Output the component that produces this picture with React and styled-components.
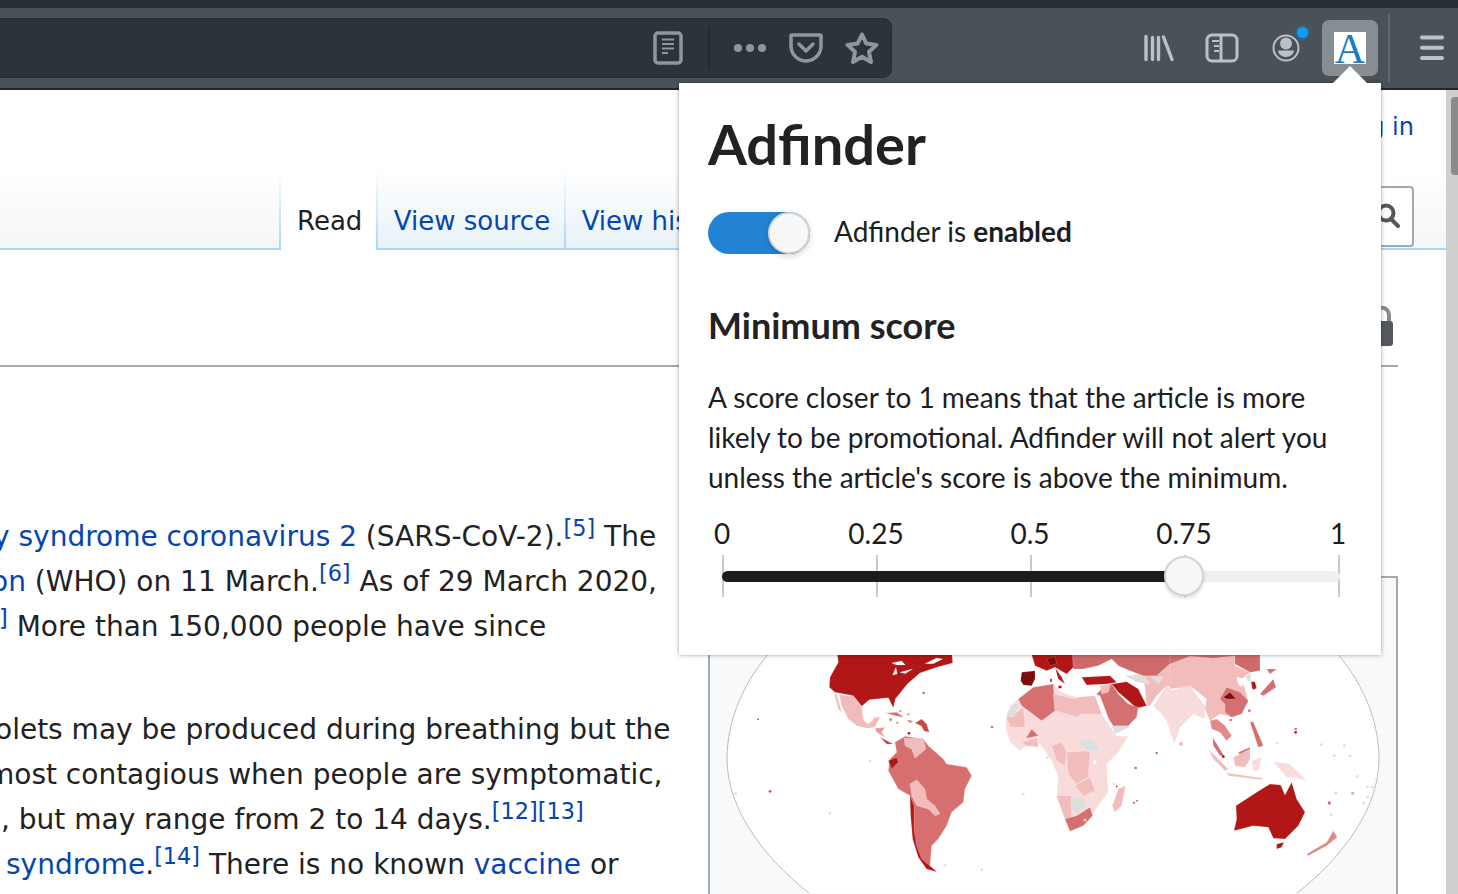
import React from 'react'
import styled, { createGlobalStyle } from 'styled-components'

const GlobalStyle = createGlobalStyle`
  html, body { margin: 0; padding: 0; background: #fff; overflow: hidden; }
  #root { width: 1458px; height: 894px; overflow: hidden; position: relative; }
  * { box-sizing: border-box; }
`

const LINK = '#0645ad'
const WIKI_FONT = '"DejaVu Sans", sans-serif'
const POPUP_FONT = 'Lato, "Open Sans", sans-serif'

/* browser chrome */
const TitleStrip = styled.div`
  height: 8px;
  background: #252f34;
`
const Toolbar = styled.div`
  height: 82px;
  background: #4a5259;
  border-bottom: 2px solid #20282c;
  display: flex;
  padding: 10px 0 0;
`
const UrlBar = styled.div`
  width: 892px;
  height: 60px;
  margin-right: auto;
  background: #2a343a;
  border: 1px solid #252e33;
  border-left: none;
  border-radius: 0 9px 9px 0;
  display: flex;
  align-items: center;
  justify-content: flex-end;
  padding-right: 1px;
`
const Slot = styled.div`
  width: ${p => p.$w || 56}px;
  height: 56px;
  flex: none;
  display: flex;
  align-items: center;
  justify-content: center;
  position: relative;
  color: ${p => p.$dim ? '#8c989e' : '#b9c3c7'};
`
const UrlDivider = styled.div`
  width: 2px;
  height: 42px;
  margin: 0 12px;
  background: #232b30;
`
const ToolGroup = styled.div`
  display: flex;
  align-items: flex-start;
  padding-top: 2px;
`
const ToolDivider = styled.div`
  width: 2px;
  height: 68px;
  margin: -6px 15px 0 10px;
  background: #626a70;
`
const ExtensionButton = styled.div`
  width: 56px;
  height: 56px;
  margin-left: 4px;
  border-radius: 7px;
  background: #888d91;
  display: flex;
  align-items: center;
  justify-content: center;
`
const ExtensionIcon = styled.span`
  width: 32px;
  height: 32px;
  background: #fff;
  color: #1b7dc0;
  font: 42px/34px "Liberation Serif", serif;
  text-align: center;
  overflow: hidden;
`
const Badge = styled.span`
  position: absolute;
  top: 7px;
  right: 10px;
  width: 11px;
  height: 11px;
  border-radius: 50%;
  background: #0a9dfb;
  box-shadow: 0 0 0 2px rgba(10, 132, 210, .35);
`

/* wiki page */
const Frame = styled.div`
  display: flex;
  height: 804px;
  overflow: hidden;
`
const Page = styled.div`
  width: 1446px;
  flex: none;
  font-family: ${WIKI_FONT};
  color: #222;
`
const ScrollTrack = styled.div`
  width: 12px;
  background: #cfcfcf;
  padding: 7px 0 0 5px;
`
const ScrollThumb = styled.div`
  width: 7px;
  height: 78px;
  border-radius: 4px 0 0 4px;
  background: #8b8b8b;
`
const Personal = styled.div`
  height: 80px;
  padding: 21px 32px 0 0;
  text-align: right;
  font-size: 24px;
  line-height: 32px;
  color: ${LINK};
`
const TabBar = styled.div`
  height: 80px;
  display: flex;
  align-items: stretch;
`
const Filler = styled.div`
  background: ${p => p.$w ? 'linear-gradient(#fff, #a7d7f9) right / 2px 100% no-repeat,' : ''} linear-gradient(#fff, #f6f6f6);
  border-bottom: 2px solid #a7d7f9;
  ${p => p.$w ? `width: ${p.$w}px; flex: none;` : 'flex: 1;'}
  display: flex;
  justify-content: flex-end;
  padding: 16px 32px 0 0;
`
const SearchBox = styled.div`
  width: 200px;
  height: 61px;
  border: 2px solid #a2a9b1;
  border-radius: 4px;
  background: #fff;
  display: flex;
  justify-content: flex-end;
  align-items: center;
  padding: 0 12px 2px 0;
`
const Tab = styled.div`
  padding: 35px 15.500px 0 16px;
  font-size: 26px;
  line-height: 32px;
  white-space: nowrap;
  color: ${p => p.$active ? '#222' : LINK};
  background: linear-gradient(#fff, #a7d7f9) right / 2px 100% no-repeat,
    ${p => p.$active ? '#fff' : 'linear-gradient(#fff, #e8f2f8)'};
  border-bottom: ${p => p.$active ? 'none' : '2px solid #a7d7f9'};
`
const TitleRow = styled.div`
  width: 1398px;
  height: 117px;
  border-bottom: 2px solid #a2a9b1;
  display: flex;
  justify-content: flex-end;
  align-items: flex-end;
  padding: 0 4px 19px 0;
`
const Article = styled.div`
  display: flex;
`
const TextColumn = styled.div`
  width: 708px;
  flex: none;
  padding-top: 147px;
  overflow: hidden;
  font-size: 28px;
  line-height: 45px;
`
const Para = styled.div`
  margin-bottom: 58px;
`
const Line = styled.div`
  white-space: nowrap;
  margin-left: ${p => p.$shift}px;
`
const A = styled.span`
  color: ${LINK};
`
const Sup = styled.sup`
  color: ${LINK};
  font-size: 22.400px;
  line-height: 0;
  vertical-align: 10px;
`
const Figure = styled.div`
  width: 690px;
  height: 400px;
  margin-top: 209px;
  border: 2px solid #a2a9b1;
  background: #f8f9fa;
`
const MapSvg = styled.svg`
  display: block;
  width: 686px;
  height: 315px;
  filter: blur(.4px);
`

/* popup */
const Popup = styled.div`
  position: absolute;
  left: 679px;
  top: 83px;
  width: 702px;
  height: 572px;
  background: #fff;
  box-shadow: 0 0 4px rgba(0, 0, 0, .4);
  padding: 23px 29px 0;
  font-family: ${POPUP_FONT};
  color: #1c1d1f;
`
const Arrow = styled.div`
  position: absolute;
  left: 653px;
  top: -17px;
  width: 0;
  height: 0;
  border-left: 18px solid transparent;
  border-right: 18px solid transparent;
  border-bottom: 18px solid #fff;
`
const Heading = styled.h1`
  margin: 0;
  font-size: 56px;
  line-height: 76px;
  font-weight: 700;
  color: #222;
`
const ToggleRow = styled.div`
  display: flex;
  align-items: center;
  gap: 24px;
  margin-top: 30px;
  font-size: 28px;
`
const ToggleLabel = styled.span`
  padding-bottom: 5px;
`
const Toggle = styled.div`
  width: 102px;
  height: 42px;
  border-radius: 21px;
  background: #2183d2;
  display: flex;
  justify-content: flex-end;
`
const Knob = styled.div`
  width: 42px;
  height: 42px;
  border-radius: 50%;
  background: #f8f8f8;
  border: 2px solid #d6d6d6;
  box-shadow: 0 2px 6px rgba(0, 0, 0, .18);
`
const SubHeading = styled.h2`
  margin: 47px 0 0;
  font-size: 36px;
  line-height: 48px;
  font-weight: 700;
  color: #222;
`
const Copy = styled.p`
  margin: 28px 0 0;
  font-size: 28px;
  line-height: 40px;
  white-space: nowrap;
`
const Slider = styled.div`
  width: 618px;
  margin: 16px 0 0 14px;
`
const LabelRow = styled.div`
  display: flex;
  justify-content: space-between;
  height: 40px;
  margin: 0 1px 0 -1px;
  font-size: 28px;
  line-height: 40px;
`
const Label = styled.span`
  width: 2px;
  display: flex;
  justify-content: center;
  white-space: nowrap;
`
const TickRow = styled.div`
  position: relative;
  display: flex;
  justify-content: space-between;
  height: 42px;
  margin-top: 2px;
`
const Tick = styled.span`
  width: 2px;
  height: 42px;
  background: #c9c9c9;
`
const Track = styled.div`
  position: absolute;
  left: 0;
  right: 0;
  top: 16px;
  height: 11px;
  border-radius: 6px;
  background: #f0f0f0;
`
const TrackFill = styled.div`
  height: 100%;
  border-radius: 6px;
  background: #1b1c1e;
`
const Handle = styled.div`
  position: absolute;
  top: 1px;
  width: 40px;
  height: 40px;
  margin-left: -22px;
  border-radius: 50%;
  background: #f8f8f8;
  border: 2px solid #d4d4d4;
  box-shadow: 0 2px 4px rgba(0, 0, 0, .15);
`

/* icons */
const ReaderIcon = () => (
  <svg width="30" height="34" viewBox="0 0 30 34" fill="none" stroke="currentColor" strokeWidth="3.500">
    <rect x="2" y="2" width="26" height="30" rx="3" />
    <path d="M9 8.500h12M9 13h12M9 17.500h12M9 22h6" strokeWidth="2.200" />
  </svg>
)
const DotsIcon = () => (
  <svg width="34" height="10" viewBox="0 0 34 10" fill="currentColor">
    <circle cx="5" cy="5" r="4" /><circle cx="17" cy="5" r="4" /><circle cx="29" cy="5" r="4" />
  </svg>
)
const PocketIcon = () => (
  <svg width="34" height="30" viewBox="0 0 34 30" fill="none" stroke="currentColor" strokeWidth="3.500" strokeLinecap="round" strokeLinejoin="round">
    <path d="M3 2h28a1 1 0 0 1 1 1v10a15 15 0 0 1-30 0V3a1 1 0 0 1 1-1z" />
    <path d="M10 11l7 7 7-7" />
  </svg>
)
const StarIcon = () => (
  <svg width="34" height="34" viewBox="0 0 34 34" fill="none" stroke="currentColor" strokeWidth="4" strokeLinejoin="round">
    <path d="M17 3.500l4.400 9.100 10.100 1.300-7.500 6.900 2 10.200L17 25.800l-9 5.200 2-10.200-7.500-6.900 10.100-1.300z" />
  </svg>
)
const LibraryIcon = () => (
  <svg width="32" height="28" viewBox="0 0 32 28" fill="none" stroke="currentColor" strokeWidth="3.400" strokeLinecap="round">
    <path d="M4 2.500v23M10.500 3.500v22M16.500 3.500v22M21.500 3l8.500 22.500" />
  </svg>
)
const SidebarIcon = () => (
  <svg width="34" height="30" viewBox="0 0 34 30" fill="none" stroke="currentColor" strokeWidth="3">
    <rect x="2" y="2" width="30" height="26" rx="5" />
    <path d="M16 2v26" />
    <path d="M7 8h7M9 13h5M9 18h5" strokeWidth="2.200" />
  </svg>
)
const AccountIcon = () => (
  <svg width="30" height="30" viewBox="0 0 30 30" fill="currentColor">
    <circle cx="15" cy="15" r="12.500" fill="none" stroke="currentColor" strokeWidth="2" />
    <circle cx="15" cy="10.500" r="6" />
    <path d="M7 17.500h16a8 6.500 0 0 1-16 0z" />
  </svg>
)
const MenuIcon = () => (
  <svg width="26" height="26" viewBox="0 0 26 26" fill="none" stroke="currentColor" strokeWidth="4" strokeLinecap="round">
    <path d="M3 2.500h20M3 12.700h20M3 23h20" />
  </svg>
)
const SearchIcon = () => (
  <svg width="24" height="26" viewBox="0 0 24 26" fill="none" stroke="#54595d" strokeWidth="4" strokeLinecap="round">
    <circle cx="10" cy="10" r="7.500" />
    <path d="M15 16l7 7" />
  </svg>
)
const LockIcon = () => (
  <svg width="28" height="40" viewBox="0 0 28 40" style={{ display: 'block' }}>
    <path d="M8 16V9a7.500 7.500 0 0 1 15 0v7" fill="none" stroke="#8a8a8a" strokeWidth="4" />
    <rect x="2" y="15" width="25" height="25" rx="3" fill="#54595d" />
  </svg>
)

/* map regions, written in crop coordinates and placed by the group transform */
const DARK = '#b11717'
const DEEP = '#7d0d0d'
const MID = '#d67070'
const SOFT = '#f2bcbc'
const PALE = '#f8dcdc'
const NONE = '#dedede'
const WHITE = '#fff'

const americas = [
  [DARK, 'M350 0L355 40L330 85L328 115L345 130L400 140L425 172L448 152L505 146L520 176L526 150L562 105L600 72L650 55L698 42L695 0Z'],
  [WHITE, 'M515 42L545 36L556 48L530 48ZM518 78L528 55L532 75ZM540 70L578 60L555 74ZM615 44L650 27L668 30L640 44Z'],
  [SOFT, 'M358 137L400 142L425 172L430 212L445 226L465 205L480 205L465 235L440 238L410 230L385 210L365 170ZM343 135L350 135L365 190L355 180Z'],
  ['#e79a9a', 'M465 238L495 235L485 250L495 265L470 250Z'],
  ['#c63c3c', 'M480 265L520 285L500 285Z'],
  [MID, 'M525 280L555 262L610 270L625 290L670 330L680 345L740 355L755 380L735 420L730 460L695 490L680 530L655 570L635 590L630 650L650 668L620 660L595 620L585 570L575 500L570 440L535 420L505 365L510 330L530 310Z'],
  [SOFT, 'M552 268L610 268L618 300L585 328L575 300L555 290ZM570 405L590 392L615 420L620 450L645 470L660 495L645 500L625 480L590 470L575 440Z'],
  [DARK, 'M505 335L530 325L535 340L515 360ZM570 440L582 470L582 540L590 590L605 630L650 668L620 660L595 625L578 570L572 500Z'],
  ['#c94848', 'M585 222L605 210L620 225L628 250L612 246L605 232Z'],
  [MID, 'M497 192L530 190L552 205L525 200ZM560 212L580 216L570 222Z'],
]
const americasDots = [
  [114, 211, 2.500, DARK], [150, 427, 4, '#d65050'], [47, 434, 4, NONE], [329, 493, 4, NONE], [675, 648, 4, NONE],
  [785, 662, 4, NONE], [611, 132, 4, MID], [541, 186, 3, MID], [512, 212, 4, MID], [565, 196, 3, MID],
  [567, 253, 4, DARK], [451, 335, 3, SOFT], [532, 221, 3, MID],
]

const africaEurasia = [
  [PALE, 'M48 205L60 170L85 150L130 115L190 105L215 130L260 145L315 140L335 195L365 240L380 262L415 262L385 310L350 345L355 430L325 470L305 500L280 530L240 547L225 510L200 445L205 385L185 335L150 285L110 290L90 305L60 280L48 240Z'],
  [MID, 'M85 150L130 115L190 105L195 185L155 215L95 170Z'],
  [SOFT, 'M190 135L255 150L265 145L315 140L335 195L270 195L265 205L195 185ZM230 310L300 305L295 385L260 405L235 375ZM200 440L245 440L245 510L225 510ZM255 410L300 385L315 425L280 440ZM50 205L75 195L100 175L105 235L60 235ZM185 290L215 280L230 310L225 350L200 335ZM95 280L140 268L145 295L110 290Z'],
  [NONE, 'M48 200L70 165L90 165L70 205ZM245 445L280 443L290 470L262 495L245 480ZM265 275L310 270L330 305L290 310ZM365 230L415 218L418 235L375 255Z'],
  [MID, 'M225 510L260 500L300 475L308 500L280 530L240 547ZM108 268L125 240L145 260Z'],
  [SOFT, 'M385 420L407 410L395 470L375 490L367 470Z'],
  [SOFT, 'M455 78L510 72L545 40L600 25L600 125L530 110L500 140L480 170L470 170L465 115Z'],
  [NONE, 'M405 80L460 75L480 105L440 100ZM482 82L520 85L505 105Z'],
  ['#cf6a6a', 'M240 0L600 0L545 40L500 80L460 80L420 65L385 50L365 30L325 50L280 60L250 60Z'],
  [DARK, 'M120 0L135 50L170 65L195 55L230 75L250 55L245 0Z'],
  [DEEP, 'M95 70L135 65L135 90L125 110L100 108L92 95ZM170 30L195 22L200 45L180 50Z'],
  [DARK, 'M195 55L215 85L225 105L205 90ZM275 85L360 80L380 100L350 105L290 108ZM365 105L410 98L445 120L470 170L440 178L415 155L385 130Z'],
  [MID, 'M320 135L345 110L365 105L385 135L415 165L445 175L440 205L415 230L370 230L345 195Z'],
  [SOFT, 'M330 110L362 105L355 130L335 135Z'],
  [PALE, 'M490 170L530 110L600 170L600 180L570 220L552 285L530 215L510 190Z'],
  [WHITE, 'M318 137L330 140L362 225L350 215ZM285 62L325 52L360 70L280 82ZM376 55L392 62L400 88L385 80Z'],
  [DARK, 'M180 90h6v8h-6ZM205 110h10v8h-10Z'],
]
const africaDots = [
  [6, 234, 4, MID], [172, 326, 4, NONE], [100, 435, 4, NONE], [500, 312, 4, MID], [437, 357, 4, MID],
  [372, 406, 4, NONE], [380, 412, 2.500, DARK], [441, 455, 3, MID], [432, 461, 2.500, DARK], [314, 340, 6, WHITE],
  [285, 513, 5, SOFT],
]

const asia = [
  [SOFT, 'M0 45L60 0L195 0L195 50L240 70L215 90L225 120L235 160L210 195L185 205L150 195L120 215L105 180L110 150L60 110L0 120Z'],
  ['#cf6a6a', 'M0 0H270V65L240 70L195 45L195 20L130 28L60 22L0 45Z'],
  [MID, 'M150 150L170 115L210 130L235 155L215 195L185 205L165 190L165 165Z'],
  [DEEP, 'M160 145L180 130L198 150L170 150Z'],
  [PALE, 'M0 125L60 110L105 170L105 210L70 195L30 235L15 280L0 250Z'],
  ['#e08a8a', 'M120 215L140 210L165 230L185 260L170 275L150 250L125 240ZM410 615L470 580L490 545L502 565L470 590L415 620Z'],
  [MID, 'M128 265L165 325L150 320L130 290ZM240 220L250 218L280 290L265 295ZM270 135L310 90L318 115L280 140ZM290 60L320 60L300 75ZM205 310L240 295L240 305L215 325Z'],
  [SOFT, 'M115 300L175 360L165 365L130 330ZM170 372L280 388L275 392L175 380ZM190 325L240 300L240 330L225 355L195 350Z'],
  [PALE, 'M245 335L275 325L265 365L250 365ZM310 338L360 345L410 395L375 385L350 385Z'],
  [DARK, 'M243 98L255 98L260 118L248 122ZM198 470L260 430L300 405L332 408L345 438L365 400L380 450L405 490L385 530L345 570L310 568L295 535L250 530L192 545L200 510ZM320 585L342 580L335 595L320 600Z'],
  [NONE, 'M225 85L245 70L240 100Z'],
  [WHITE, 'M200 85L225 90L215 115L205 105Z'],
]
const asiaDots = [
  [377, 240, 4, MID], [377, 250, 4, DARK], [322, 283, 4, NONE], [454, 287, 4, NONE], [523, 290, 4, NONE], [493, 320, 4, NONE],
  [540, 320, 4, NONE], [562, 382, 4, NONE], [620, 390, 4, NONE], [592, 413, 4, NONE], [607, 415, 4, NONE], [613, 423, 4, NONE],
  [497, 432, 5, NONE], [593, 444, 4, NONE], [582, 462, 4, NONE], [484, 497, 4, NONE], [548, 433, 5, '#eaa'], [478, 462, 5, MID],
  [160, 323, 4, DARK], [33, 285, 6, SOFT], [238, 185, 4, MID], [182, 213, 4, MID],
]

const Region = ({ x, y, shapes, dots }) => (
  <g transform={`translate(${x} ${y}) scale(.3333)`}>
    {shapes.map(([fill, d], i) => <path key={i} d={d} fill={fill} stroke="#fff" strokeOpacity=".35" strokeWidth="1.500" />)}
    {dots.map(([cx, cy, r, fill], i) => <circle key={i} cx={cx} cy={cy} r={r} fill={fill} />)}
  </g>
)

const WorldMap = () => (
  <MapSvg viewBox="710 579 686 315">
    <path
      d="M773 650C745 680 727 720 727 760C727 810 765 860 809 894L830 910H1276L1297 894C1341 860 1379 810 1379 760C1379 720 1361 680 1333 650Z"
      fill="#fff"
      stroke="#bbb"
    />
    <Region x={720} y={650} shapes={americas} dots={americasDots} />
    <Region x={990} y={650} shapes={africaEurasia} dots={africaDots} />
    <Region x={1170} y={650} shapes={asia} dots={asiaDots} />
  </MapSvg>
)

const TICKS = ['0', '0.25', '0.5', '0.75', '1']

const App = () => {
  const score = 0.75
  return (
    <>
      <GlobalStyle />
      <TitleStrip />
      <Toolbar>
        <UrlBar>
          <Slot $dim><ReaderIcon /></Slot>
          <UrlDivider />
          <Slot $dim><DotsIcon /></Slot>
          <Slot $dim><PocketIcon /></Slot>
          <Slot $dim><StarIcon /></Slot>
        </UrlBar>
        <ToolGroup>
          <Slot $w={64}><LibraryIcon /></Slot>
          <Slot $w={64}><SidebarIcon /></Slot>
          <Slot $w={64}><AccountIcon /><Badge /></Slot>
          <ExtensionButton><ExtensionIcon>A</ExtensionIcon></ExtensionButton>
          <ToolDivider />
          <Slot $w={53}><MenuIcon /></Slot>
        </ToolGroup>
      </Toolbar>

      <Frame>
        <Page>
          <Personal>Log in</Personal>
          <TabBar>
            <Filler $w={281} />
            <Tab $active>Read</Tab>
            <Tab>View source</Tab>
            <Tab>View history</Tab>
            <Filler>
              <SearchBox><SearchIcon /></SearchBox>
            </Filler>
          </TabBar>
          <TitleRow><LockIcon /></TitleRow>
          <Article>
            <TextColumn>
              <Para>
                <Line $shift={-7}><A>y syndrome coronavirus 2</A> (SARS-CoV-2).<Sup>[5]</Sup> The</Line>
                <Line $shift={-9}><A>on</A> (WHO) on 11 March.<Sup>[6]</Sup> As of 29 March 2020,</Line>
                <Line $shift={-1}><Sup>]</Sup> More than 150,000 people have since</Line>
              </Para>
              <Para>
                <Line $shift={-5}>olets may be produced during breathing but the</Line>
                <Line $shift={-13}>most contagious when people are symptomatic,</Line>
                <Line $shift={1}>, but may range from 2 to 14 days.<Sup>[12][13]</Sup></Line>
                <Line $shift={6}><A>syndrome</A>.<Sup>[14]</Sup> There is no known <A>vaccine</A> or</Line>
              </Para>
            </TextColumn>
            <Figure><WorldMap /></Figure>
          </Article>
        </Page>
        <ScrollTrack><ScrollThumb /></ScrollTrack>
      </Frame>

      <Popup>
        <Arrow />
        <Heading>Adfinder</Heading>
        <ToggleRow>
          <Toggle><Knob /></Toggle>
          <ToggleLabel>Adfinder is <b>enabled</b></ToggleLabel>
        </ToggleRow>
        <SubHeading>Minimum score</SubHeading>
        <Copy>
          A score closer to 1 means that the article is more<br />
          likely to be promotional. Adfinder will not alert you<br />
          unless the article's score is above the minimum.
        </Copy>
        <Slider>
          <LabelRow>{TICKS.map(t => <Label key={t}>{t}</Label>)}</LabelRow>
          <TickRow>
            <Track><TrackFill style={{ width: `${score * 100}%` }} /></Track>
            {TICKS.map(t => <Tick key={t} />)}
            <Handle style={{ left: `${score * 100}%` }} />
          </TickRow>
        </Slider>
      </Popup>
    </>
  )
}

export default App
